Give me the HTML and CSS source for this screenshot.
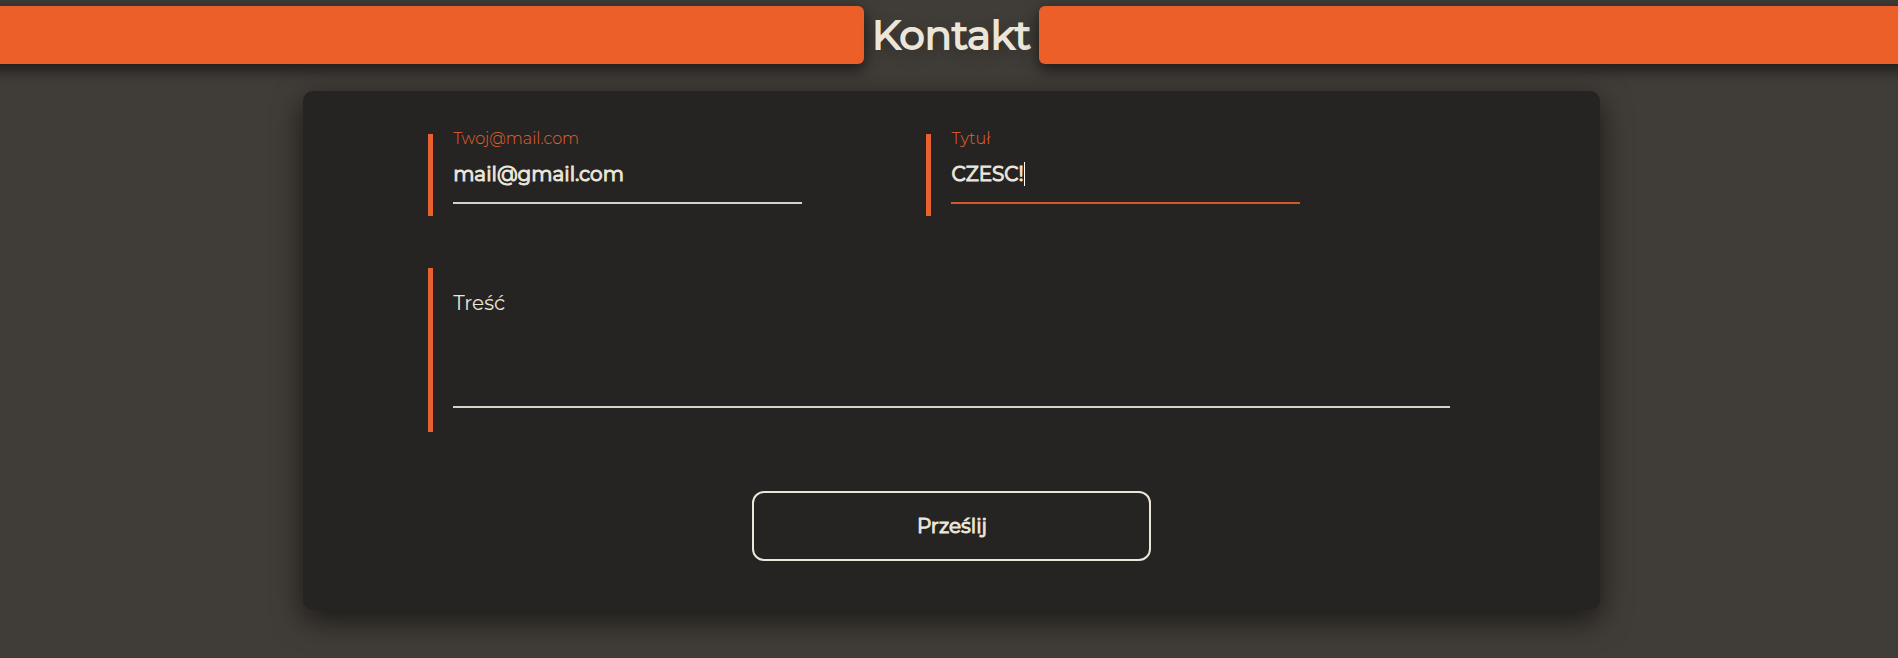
FILE: index.html
```html
<!DOCTYPE html>
<html lang="pl">
<head>
  <meta charset="utf-8">
  <meta name="viewport" content="width=device-width, initial-scale=1">
  <title>Kontakt</title>
  <link rel="stylesheet" href="styles.css">
</head>
<body>
  <main class="contact">
    <header class="heading">
      <span class="heading-bar heading-bar-left"></span>
      <h1 class="heading-title">Kontakt</h1>
      <span class="heading-bar heading-bar-right"></span>
    </header>
    <form class="card">
      <div class="fields">
        <div class="field">
          <label class="label" for="email">Twoj@mail.com</label>
          <div class="line">
            <input class="input" id="email" type="text" value="mail@gmail.com">
          </div>
        </div>
        <div class="field">
          <label class="label" for="subject">Tytuł</label>
          <div class="line line-active">
            <input class="input input-active" id="subject" type="text" value="CZESC!">
            <span class="caret"></span>
          </div>
        </div>
        <div class="field field-message">
          <label class="label label-message" for="message">Treść</label>
          <textarea class="message" id="message"></textarea>
        </div>
      </div>
      <button class="submit" type="submit">Prześlij</button>
    </form>
  </main>
</body>
</html>
```
FILE: styles.css
```css
* {
  box-sizing: border-box;
}

body {
  margin: 0;
  min-height: 100vh;
  background: #403c37;
  color: #ece5da;
  font-family: Montserrat, Inter, "Noto Sans", sans-serif;
  overflow-x: hidden;
}

.contact {
  padding: 6px 0 48px 5px;
}

.heading {
  display: grid;
  grid-template-columns: 1fr auto 1fr;
  column-gap: 8px;
  margin-bottom: 27px;
}

.heading-bar {
  background: #ec5f29;
  box-shadow: 0 5px 15px rgba(0, 0, 0, 0.6);
}

.heading-bar-left {
  margin-left: -25px;
  border-radius: 0 6px 6px 0;
}

.heading-bar-right {
  margin-right: -20px;
  border-radius: 6px 0 0 6px;
}

.heading-title {
  margin: 0;
  font-size: 40px;
  font-weight: 400;
  line-height: 58px;
  -webkit-text-stroke: 2px currentColor;
  text-shadow: 0 5px 15px rgba(0, 0, 0, 0.4);
}

.card {
  display: flex;
  flex-direction: column;
  align-items: center;
  width: 68.5%;
  margin: 0 auto;
  padding: 43px 150px 49px 125px;
  border-radius: 10px;
  background: #252422;
  box-shadow: 0 10px 30px rgba(0, 0, 0, 0.6);
}

.fields {
  display: grid;
  grid-template-columns: 1fr 1fr;
  row-gap: 52px;
  width: 100%;
  padding-right: 25px;
}

.field {
  display: flex;
  flex-direction: column;
  width: 75%;
  height: 82px;
  padding-left: 20px;
  border-left: 5px solid #e8622f;
}

.field-message {
  grid-column: 1 / -1;
  width: auto;
  height: 164px;
  margin-right: -25px;
  padding-top: 23px;
}

.label {
  margin-top: -5px;
  color: #e8622f;
  font-size: 16px;
  font-weight: 300;
  line-height: 20px;
}

.label-message {
  margin: 0;
  color: #ece5da;
  font-size: 20px;
  font-weight: 400;
  line-height: 24px;
}

.line {
  display: flex;
  align-items: center;
  height: 55px;
  padding-bottom: 4px;
  border-bottom: 2px solid #d8d2c8;
}

.line-active {
  border-color: #d3582c;
}

.input {
  width: 100%;
  padding: 0;
  border: 0;
  outline: 0;
  background: transparent;
  color: inherit;
  font: inherit;
  font-size: 20px;
  line-height: 24px;
  -webkit-text-stroke: 1px currentColor;
}

.input-active {
  width: auto;
  field-sizing: content;
}

.caret {
  width: 1px;
  height: 24px;
  background: #fff;
}

.message {
  flex: 1;
  width: 100%;
  margin-bottom: 24px;
  padding: 0;
  border: 0;
  border-bottom: 2px solid #d8d2c8;
  outline: 0;
  resize: none;
  background: transparent;
  color: inherit;
  font: inherit;
  font-size: 20px;
}

.submit {
  width: 399px;
  height: 70px;
  margin: 59px 0 0 26px;
  border: 2px solid #ece5da;
  border-radius: 12px;
  background: transparent;
  color: inherit;
  font: inherit;
  font-size: 20px;
  -webkit-text-stroke: 1px currentColor;
}
```
